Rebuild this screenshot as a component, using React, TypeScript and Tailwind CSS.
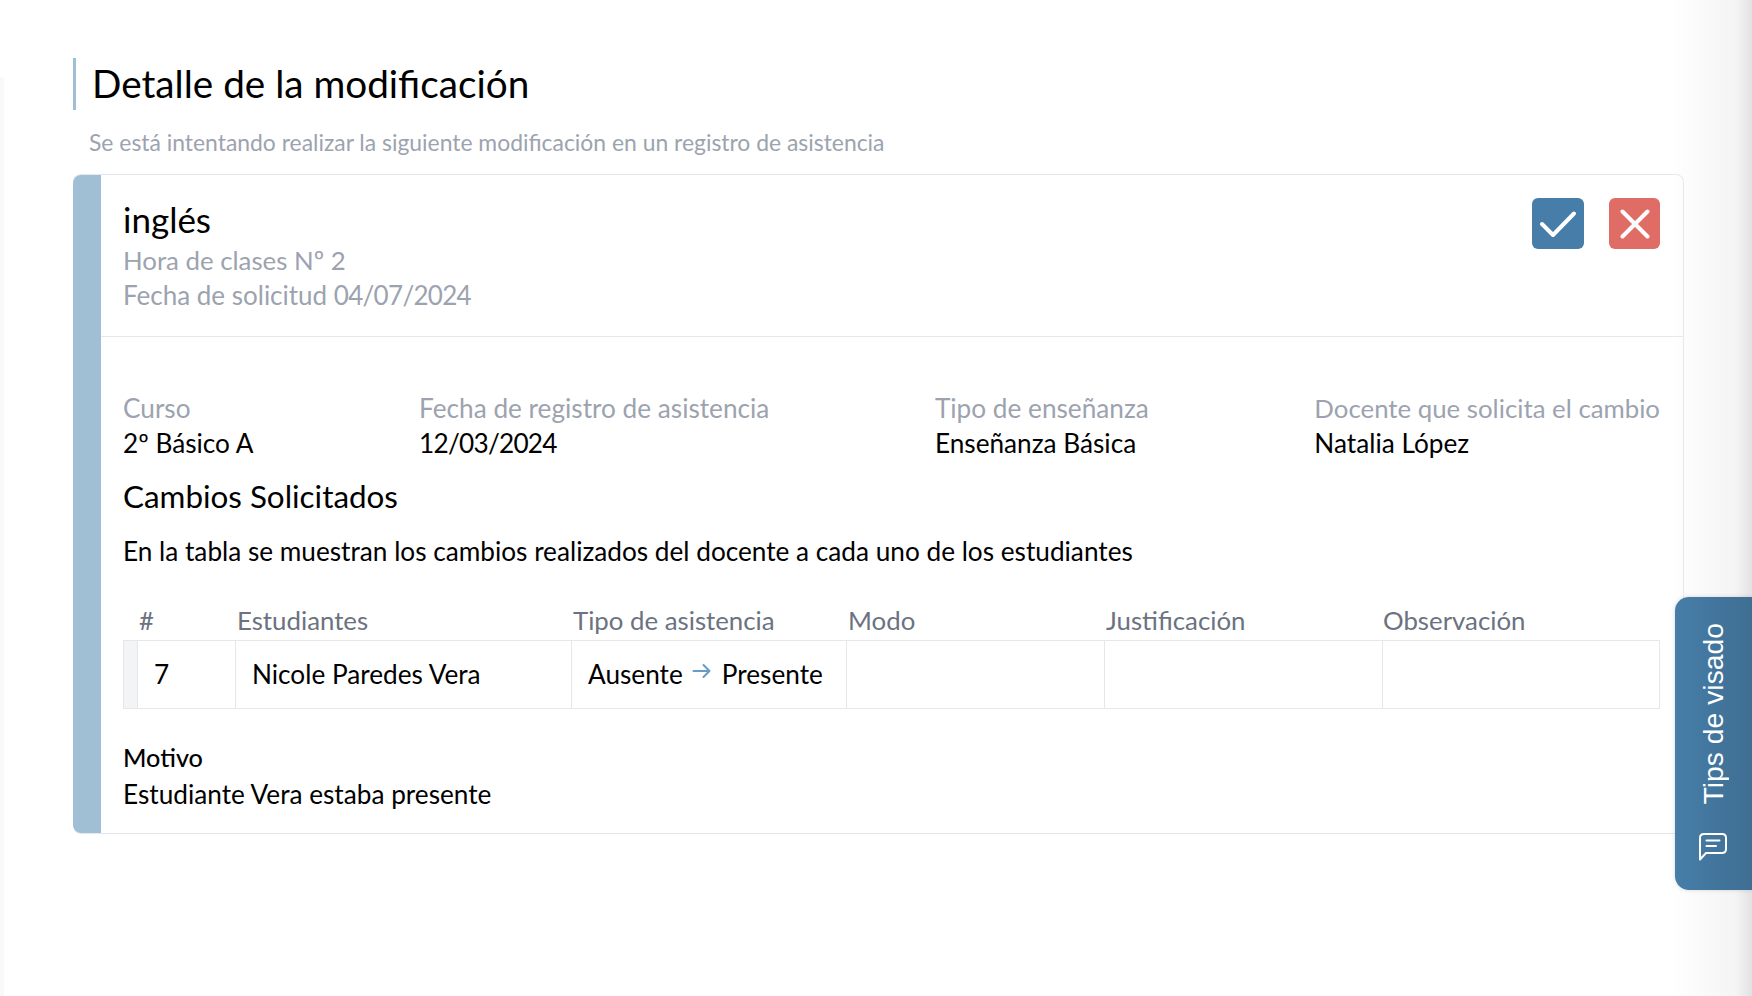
const F = "font-['Lato','Noto_Sans',sans-serif]";

function Info({ label, value, digits, labelClass = "text-[26.2px]" }: { label: string; value: string; digits?: boolean; labelClass?: string }) {
  return (
    <div className="flex flex-col">
      <span className={`leading-[36px] text-[#9ca3af] ${labelClass}`}>{label}</span>
      <span className={`text-[26.2px] leading-[35px] text-black ${digits ? "tracking-[-0.75px]" : ""}`}>{value}</span>
    </div>
  );
}

const heads = [
  ["#", "w-[112px] pl-[16px]"],
  ["Estudiantes", "w-[336px] pl-[2px]"],
  ["Tipo de asistencia", "w-[275px] pl-[2px]"],
  ["Modo", "w-[258px] pl-[2px]"],
  ["Justificación", "w-[277px] pl-[2px]"],
  ["Observación", "w-[279px] pl-[2px]"],
];

export default function App() {
  return (
    <div className={`relative h-[996px] w-[1752px] overflow-hidden bg-white ${F}`}>
      <div className="absolute bottom-0 left-0 top-[77px] w-[4px] bg-[#f8f9fb]" />
      <div className="pl-[73px] pr-[68px] pt-[58px]">
        <div className="flex h-[52px] items-center border-l-[3px] border-[#a0bfd5] pl-[16px]">
          <h1 className="mt-[-2px] text-[38.7px] leading-[52px] text-black">Detalle de la modificación</h1>
        </div>
        <p className="mt-[17px] pl-[16px] text-[22.9px] leading-[30px] text-[#9ca3af]">
          Se está intentando realizar la siguiente modificación en un registro de asistencia
        </p>
        <div className="mt-[17px] flex h-[660px] rounded-[8px] border border-l-0 border-[#e5e7eb]">
          <div className="w-[28px] shrink-0 rounded-l-[8px] bg-[#a0bfd5]" />
          <div className="flex min-w-0 flex-1 flex-col">
            <div className="flex h-[162px] items-start justify-between border-b border-[#e5e7eb] pl-[22px] pr-[23px] pt-[22px]">
              <div className="flex flex-col">
                <span className="text-[35px] leading-[44px] text-black">inglés</span>
                <span className="mt-[2px] text-[25.8px] leading-[35px] text-[#9ca3af]">Hora de clases Nº 2</span>
                <span className="text-[26px] leading-[35px] text-[#9ca3af]">
                  Fecha de solicitud <span className="tracking-[-0.7px]">04/07/2024</span>
                </span>
              </div>
              <div className="mt-[1px] flex gap-[25px]">
                <button className="flex h-[51px] w-[52px] items-center justify-center rounded-[6px] bg-[#467ea9]">
                  <svg width="38" height="28" viewBox="0 0 38 28" fill="none" stroke="white" strokeWidth="4" strokeLinecap="round" strokeLinejoin="round">
                    <path d="M3 14 L14 25 L35 3.5" />
                  </svg>
                </button>
                <button className="flex h-[51px] w-[51px] items-center justify-center rounded-[6px] bg-[#e06c66]">
                  <svg width="30" height="30" viewBox="0 0 30 30" fill="none" stroke="white" strokeWidth="4" strokeLinecap="round">
                    <path d="M2.5 2.5 L27.5 27.5 M27.5 2.5 L2.5 27.5" />
                  </svg>
                </button>
              </div>
            </div>
            <div className="flex flex-1 flex-col pl-[22px] pr-[23px] pt-[53px]">
              <div className="flex justify-between">
                <Info label="Curso" value="2º Básico A" />
                <Info label="Fecha de registro de asistencia" value="12/03/2024" digits />
                <Info label="Tipo de enseñanza" value="Enseñanza Básica" />
                <Info label="Docente que solicita el cambio" value="Natalia López" labelClass="text-[25.8px]" />
              </div>
              <h2 className="mt-[15px] text-[31.4px] leading-[40px] text-black">Cambios Solicitados</h2>
              <p className="mt-[18px] text-[26.2px] leading-[35px] text-black">
                En la tabla se muestran los cambios realizados del docente a cada uno de los estudiantes
              </p>
              <div className="mt-[31px] flex h-[40px] items-center text-[25.8px] text-[#6b7280]">
                {heads.map(([t, c]) => (
                  <span key={t} className={`shrink-0 ${c}`}>{t}</span>
                ))}
              </div>
              <div className="flex h-[69px] border border-[#e5e7eb] text-[26.2px] text-black">
                <div className="w-[14px] shrink-0 border-r border-[#e5e7eb] bg-[#f3f4f6]" />
                <div className="flex w-[98px] shrink-0 items-center border-r border-[#e5e7eb] pl-[16px]">7</div>
                <div className="flex w-[336px] shrink-0 items-center border-r border-[#e5e7eb] pl-[16px]">Nicole Paredes Vera</div>
                <div className="flex w-[275px] shrink-0 items-center border-r border-[#e5e7eb] pl-[16px]">
                  Ausente
                  <svg className="ml-[9px] mr-[11px] mt-[-8px] shrink-0" width="19" height="16" viewBox="0 0 19 16" fill="none" stroke="#6a9bc3" strokeWidth="2" strokeLinecap="round" strokeLinejoin="round">
                    <path d="M1.5 8 H17.5 M11.5 2 L17.5 8 L11.5 14" />
                  </svg>
                  Presente
                </div>
                <div className="w-[258px] shrink-0 border-r border-[#e5e7eb]" />
                <div className="w-[278px] shrink-0 border-r border-[#e5e7eb]" />
                <div className="flex-1" />
              </div>
              <span className="mt-[31px] text-[25.2px] font-medium leading-[35px] text-black">Motivo</span>
              <span className="mt-[2px] text-[26.2px] leading-[35px] text-black">Estudiante Vera estaba presente</span>
            </div>
          </div>
        </div>
      </div>

      <div className="absolute right-0 top-0 h-full w-[80px] bg-gradient-to-r from-white/0 via-[#f4f4f5] via-80% to-[#e2e2e3]" />

      <div className="absolute right-0 top-[597px] flex h-[293px] w-[77px] flex-col items-center justify-between rounded-l-[14px] bg-gradient-to-r from-[#467ea9] to-[#3f6e92] pb-[28px] pr-[2px] pt-[26px] shadow-[0_0_4px_rgba(0,0,0,0.15)]">
        <span className="rotate-180 whitespace-nowrap font-['Liberation_Sans',sans-serif] text-[28.3px] leading-[30px] text-white [writing-mode:vertical-rl]">
          Tips de visado
        </span>
        <svg width="30" height="30" viewBox="0 0 30 30" fill="none" stroke="white" strokeWidth="2" strokeLinecap="round" strokeLinejoin="round">
          <path d="M2 27.5 V6 Q2 2 6 2 H24 Q28 2 28 6 V17 Q28 21 24 21 H8 Z" />
          <path d="M8.5 8.5 H21.5 M8.5 14 H18" />
        </svg>
      </div>
    </div>
  );
}
